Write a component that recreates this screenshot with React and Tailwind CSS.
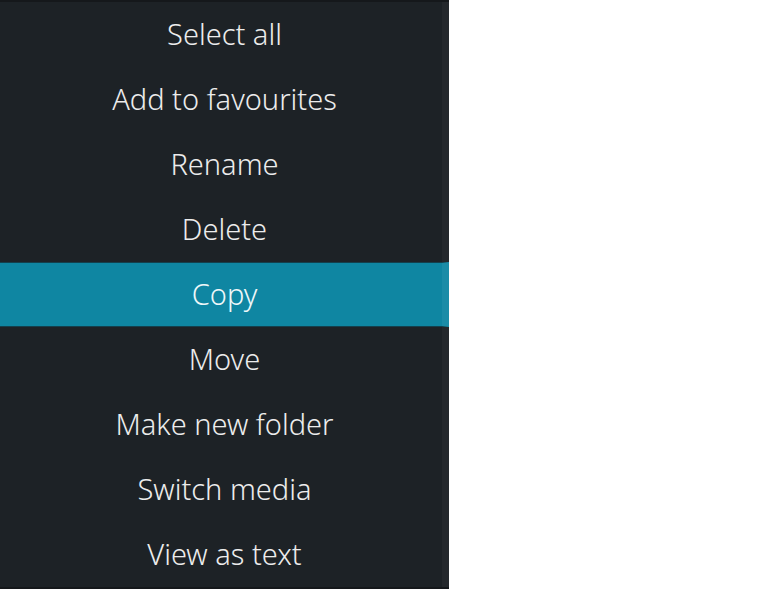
import React from 'react';

const items = [
  'Select all',
  'Add to favourites',
  'Rename',
  'Delete',
  'Copy',
  'Move',
  'Make new folder',
  'Switch media',
  'View as text',
];

export default function App() {
  const active = 4;
  return (
    <div className="w-[762px] h-[589px] bg-white" style={{ fontFamily: '"Noto Sans", "Open Sans", sans-serif' }}>
      <div className="w-[449px] h-[589px] bg-[#1d2226] border-t-2 border-b-2 border-[#15181b] flex flex-col">
        {items.map((label, i) => (
          <div
            key={label}
            className={
              i === active
                ? 'h-[65px] shrink-0 flex items-center justify-center pl-[7px] pb-[2px] bg-[#0f86a2] border-y border-[#13404d] border-r-[7px] border-r-white/[0.05] text-[29px] font-light text-[#eef7f9]'
                : 'h-[65px] shrink-0 flex items-center justify-center pl-[7px] pb-[2px] border-r-[7px] border-r-white/[0.03] text-[29px] font-light text-[#ececec]'
            }
          >
            {label}
          </div>
        ))}
      </div>
    </div>
  );
}
